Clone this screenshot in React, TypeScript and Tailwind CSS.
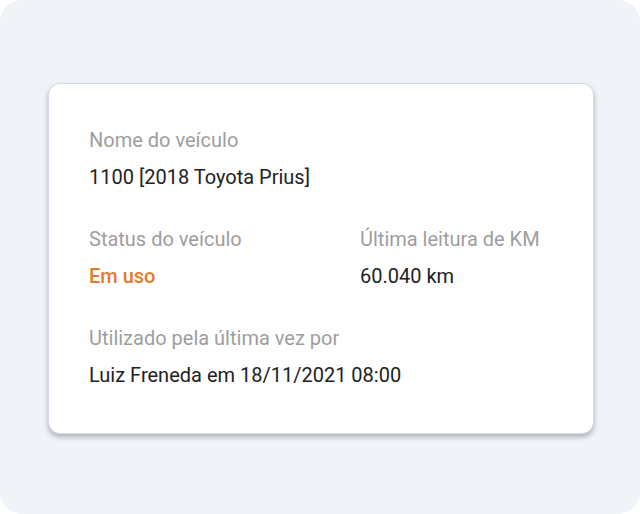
const fields = [
  { label: "Status do veículo", value: "Em uso", accent: true },
  { label: "Última leitura de KM", value: "60.040 km" },
];

function Field({ label, value, accent }: { label: string; value: string; accent?: boolean }) {
  return (
    <div className="flex flex-col gap-[13px]">
      <p className="text-[20px] leading-6 text-[#9e9e9e]">{label}</p>
      <p className={accent ? "text-[20px] leading-6 font-medium text-[#e8792a]" : "text-[20px] leading-6 text-[#222]"}>
        {value}
      </p>
    </div>
  );
}

export default function App() {
  return (
    <div className="h-[514px] w-[640px] bg-white font-['Roboto',sans-serif]">
      <div className="flex h-full w-full items-start rounded-[22px] bg-[#f0f3f8] pl-12 pr-[46px] pt-[83px]">
        <div className="flex w-full flex-col gap-[38px] rounded-xl border border-[#d3dbec] bg-white pb-[46px] pl-10 pr-10 pt-11 shadow-[0_3px_5px_rgba(50,60,80,0.35)]">
          <Field label="Nome do veículo" value="1100 [2018 Toyota Prius]" />
          <div className="grid grid-cols-[271px_1fr]">
            {fields.map((f) => (
              <Field key={f.label} {...f} />
            ))}
          </div>
          <Field label="Utilizado pela última vez por" value="Luiz Freneda em 18/11/2021 08:00" />
        </div>
      </div>
    </div>
  );
}
